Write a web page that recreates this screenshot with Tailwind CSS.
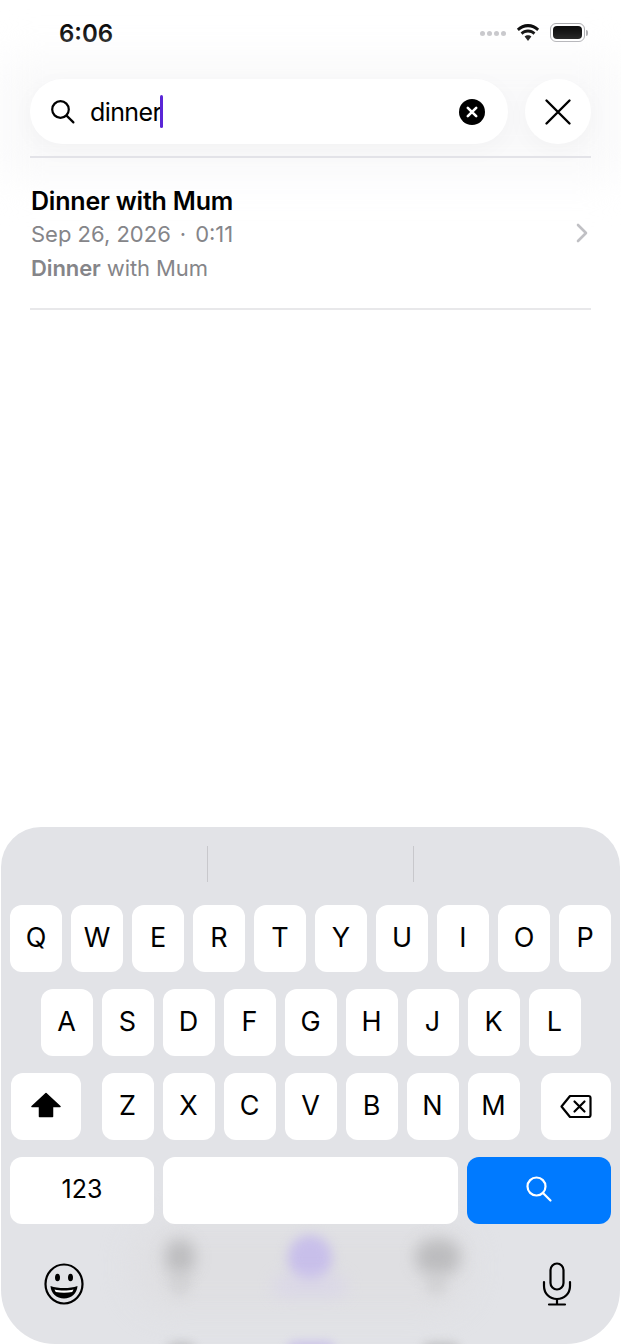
<!DOCTYPE html>
<html lang="en">
<head>
    <meta charset="UTF-8">
    <meta name="viewport" content="width=device-width, initial-scale=1.0">
    <title>Search</title>
    <script src="https://cdn.jsdelivr.net/npm/@tailwindcss/browser@4"></script>
</head>
<body class="bg-white font-['Inter',sans-serif] text-black">
<div class="relative flex h-[1344px] w-[621px] flex-col overflow-hidden">

    <!-- Status bar -->
    <div class="flex h-[68px] items-start justify-between pl-[59px] pr-[33px] pt-[20px]">
        <span class="text-[24px] font-semibold leading-[28px]">6:06</span>
        <div class="flex items-center pt-[3px]">
            <div class="mr-[10px] mt-[2px] flex gap-[2px]">
                <span class="h-[5px] w-[5px] rounded-full bg-[#c4c4c8]"></span>
                <span class="h-[5px] w-[5px] rounded-full bg-[#c4c4c8]"></span>
                <span class="h-[5px] w-[5px] rounded-full bg-[#c4c4c8]"></span>
                <span class="h-[5px] w-[5px] rounded-full bg-[#c4c4c8]"></span>
            </div>
            <svg class="mr-[10px]" width="24" height="18" viewBox="0 0 24 18" fill="black">
                <path d="M12 3.2c3.6 0 6.8 1.4 9.200 3.700l1.900-2.100C20.100 1.900 16.200 0 12 0S3.900 1.900.900 4.800l1.900 2.100C5.200 4.600 8.400 3.200 12 3.200z"/>
                <path d="M12 8.600c2.100 0 4 .8 5.500 2.100l1.900-2.100C17.400 6.800 14.800 5.600 12 5.600S6.600 6.800 4.600 8.600l1.900 2.100C8 9.400 9.900 8.600 12 8.600z"/>
                <path d="M12 11.200c-1.300 0-2.500.5-3.400 1.300L12 17l3.400-4.500c-.9-.8-2.100-1.300-3.400-1.300z"/>
            </svg>
            <div class="flex items-center">
                <div class="flex h-[19px] w-[35px] items-center justify-center rounded-[6px] border border-[#a8a8ac] p-[2px]">
                    <div class="h-full w-full rounded-[4px] bg-black"></div>
                </div>
                <div class="ml-[1px] h-[6px] w-[2px] rounded-r-full bg-[#a8a8ac]"></div>
            </div>
        </div>
    </div>

    <!-- Search row -->
    <div class="relative">
        <div class="pointer-events-none absolute inset-x-0 top-[-10px] h-[120px] bg-[#f9f9fa] blur-[20px]"></div>
        <div class="relative mt-[11px] flex h-[65px] items-stretch pl-[30px] pr-[30px]">
            <div class="flex w-[478px] items-center rounded-full bg-white pl-[20px] pr-[23px] shadow-[0_6px_24px_rgba(0,0,0,0.03)]">
                <svg width="26" height="26" viewBox="0 0 26 26" fill="none" stroke="black" stroke-width="2.200" stroke-linecap="round">
                    <circle cx="10.500" cy="10.500" r="8.300"/>
                    <path d="M16.600 16.600l6.800 6.800"/>
                </svg>
                <div class="ml-[14px] flex items-center text-[25px] leading-[32px] tracking-[-0.6px]">
                    <span>dinner</span>
                    <span class="ml-[-1px] h-[33px] w-[3px] rounded-full bg-[#5a26d6]"></span>
                </div>
                <svg class="ml-auto" width="26" height="26" viewBox="0 0 26 26">
                    <circle cx="13" cy="13" r="13" fill="black"/>
                    <path d="M8.800 8.800l8.400 8.400M17.200 8.800l-8.400 8.400" stroke="white" stroke-width="2.600" stroke-linecap="round"/>
                </svg>
            </div>
            <div class="ml-[17px] flex w-[66px] items-center justify-center rounded-full bg-white shadow-[0_6px_24px_rgba(0,0,0,0.03)]">
                <svg width="28" height="28" viewBox="0 0 28 28" fill="none" stroke="black" stroke-width="2.400" stroke-linecap="round">
                    <path d="M2.500 2.500l23 23M25.500 2.500l-23 23"/>
                </svg>
            </div>
        </div>
        <div class="relative mx-[30px] mt-[12px] h-[2px] bg-[#e3e3e8]"></div>
    </div>

    <!-- Result -->
    <div class="relative mx-[30px] flex h-[152px] items-center justify-between border-b-2 border-[#e8e8ea]">
        <div class="pl-[1px] pt-[2px]">
            <div class="mb-[-1px] mt-[1px] text-[25px] font-semibold leading-[34px] tracking-[-0.2px]">Dinner with Mum</div>
            <div class="flex text-[22px] leading-[34px] text-[#858589]">
                <span>Sep 26, 2026</span>
                <span class="mx-[9px]">·</span>
                <span>0:11</span>
            </div>
            <div class="text-[22px] leading-[34px] tracking-[-0.1px] text-[#858589]"><span class="font-semibold">Dinner</span> with Mum</div>
        </div>
        <svg class="mr-[3px]" width="12" height="20" viewBox="0 0 12 20" fill="none" stroke="#c0c0c4" stroke-width="2.600" stroke-linecap="round" stroke-linejoin="round">
            <path d="M2 2l8 8-8 8"/>
        </svg>
    </div>

    <!-- Keyboard -->
    <div class="relative mx-[1px] mt-auto h-[517px] overflow-hidden rounded-t-[40px] rounded-b-[54px] bg-[#e2e3e7]">
        <!-- blurred content behind the keyboard -->
        <div class="absolute left-[130px] top-[395px] h-[90px] w-[340px] rounded-[40px] bg-[#dfdfe2] blur-[14px]"></div>
        <div class="absolute left-[164px] top-[412px] h-[36px] w-[30px] rounded-full bg-[#b4b4b6] opacity-80 blur-[8px]"></div>
        <div class="absolute left-[168px] top-[445px] h-[24px] w-[22px] rounded-full bg-[#c8c8ca] opacity-50 blur-[6px]"></div>
        <div class="absolute left-[287px] top-[408px] h-[46px] w-[44px] rounded-full bg-[#c8bfea] blur-[6px]"></div>
        <div class="absolute left-[272px] top-[448px] h-[22px] w-[74px] rounded-full bg-[#d8d3ea] opacity-60 blur-[8px]"></div>
        <div class="absolute left-[414px] top-[412px] h-[36px] w-[46px] rounded-full bg-[#b4b4b6] opacity-80 blur-[8px]"></div>
        <div class="absolute left-[424px] top-[445px] h-[24px] w-[22px] rounded-full bg-[#c8c8ca] opacity-50 blur-[6px]"></div>
        <div class="absolute left-[165px] top-[515px] h-[20px] w-[30px] rounded-full bg-[#b0b0b2] opacity-60 blur-[5px]"></div>
        <div class="absolute left-[285px] top-[514px] h-[20px] w-[50px] rounded-full bg-[#c4b9ea] opacity-70 blur-[5px]"></div>
        <div class="absolute left-[420px] top-[515px] h-[20px] w-[40px] rounded-full bg-[#b0b0b2] opacity-60 blur-[5px]"></div>

        <!-- Suggestion bar -->
        <div class="relative flex h-[78px] items-start justify-center gap-[205px] pt-[19px]">
            <span class="h-[36px] w-[1px] bg-[#c8c8cc]"></span>
            <span class="h-[36px] w-[1px] bg-[#c8c8cc]"></span>
        </div>

        <div class="relative flex flex-col gap-[17px] text-[27px] leading-none">
            <div class="flex justify-center gap-[9px]">
                <div class="flex h-[67px] w-[52px] items-center justify-center rounded-[12px] bg-white pb-[3px]">Q</div>
                <div class="flex h-[67px] w-[52px] items-center justify-center rounded-[12px] bg-white pb-[3px]">W</div>
                <div class="flex h-[67px] w-[52px] items-center justify-center rounded-[12px] bg-white pb-[3px]">E</div>
                <div class="flex h-[67px] w-[52px] items-center justify-center rounded-[12px] bg-white pb-[3px]">R</div>
                <div class="flex h-[67px] w-[52px] items-center justify-center rounded-[12px] bg-white pb-[3px]">T</div>
                <div class="flex h-[67px] w-[52px] items-center justify-center rounded-[12px] bg-white pb-[3px]">Y</div>
                <div class="flex h-[67px] w-[52px] items-center justify-center rounded-[12px] bg-white pb-[3px]">U</div>
                <div class="flex h-[67px] w-[52px] items-center justify-center rounded-[12px] bg-white pb-[3px]">I</div>
                <div class="flex h-[67px] w-[52px] items-center justify-center rounded-[12px] bg-white pb-[3px]">O</div>
                <div class="flex h-[67px] w-[52px] items-center justify-center rounded-[12px] bg-white pb-[3px]">P</div>
            </div>
            <div class="flex justify-center gap-[9px]">
                <div class="flex h-[67px] w-[52px] items-center justify-center rounded-[12px] bg-white pb-[3px]">A</div>
                <div class="flex h-[67px] w-[52px] items-center justify-center rounded-[12px] bg-white pb-[3px]">S</div>
                <div class="flex h-[67px] w-[52px] items-center justify-center rounded-[12px] bg-white pb-[3px]">D</div>
                <div class="flex h-[67px] w-[52px] items-center justify-center rounded-[12px] bg-white pb-[3px]">F</div>
                <div class="flex h-[67px] w-[52px] items-center justify-center rounded-[12px] bg-white pb-[3px]">G</div>
                <div class="flex h-[67px] w-[52px] items-center justify-center rounded-[12px] bg-white pb-[3px]">H</div>
                <div class="flex h-[67px] w-[52px] items-center justify-center rounded-[12px] bg-white pb-[3px]">J</div>
                <div class="flex h-[67px] w-[52px] items-center justify-center rounded-[12px] bg-white pb-[3px]">K</div>
                <div class="flex h-[67px] w-[52px] items-center justify-center rounded-[12px] bg-white pb-[3px]">L</div>
            </div>
            <div class="flex justify-center gap-[9px]">
                <div class="mr-[12px] flex h-[67px] w-[70px] items-center justify-center rounded-[12px] bg-white pb-[3px]">
                    <svg width="30" height="26" viewBox="0 0 30 26" fill="black">
                        <path d="M15 1.500L1 14.500h7.500V24.500h13V14.500H29z" stroke="black" stroke-linejoin="round" stroke-width="1.500"/>
                    </svg>
                </div>
                <div class="flex h-[67px] w-[52px] items-center justify-center rounded-[12px] bg-white pb-[3px]">Z</div>
                <div class="flex h-[67px] w-[52px] items-center justify-center rounded-[12px] bg-white pb-[3px]">X</div>
                <div class="flex h-[67px] w-[52px] items-center justify-center rounded-[12px] bg-white pb-[3px]">C</div>
                <div class="flex h-[67px] w-[52px] items-center justify-center rounded-[12px] bg-white pb-[3px]">V</div>
                <div class="flex h-[67px] w-[52px] items-center justify-center rounded-[12px] bg-white pb-[3px]">B</div>
                <div class="flex h-[67px] w-[52px] items-center justify-center rounded-[12px] bg-white pb-[3px]">N</div>
                <div class="flex h-[67px] w-[52px] items-center justify-center rounded-[12px] bg-white pb-[3px]">M</div>
                <div class="ml-[12px] flex h-[67px] w-[70px] items-center justify-center rounded-[12px] bg-white pb-[1px]">
                    <svg width="32" height="25" viewBox="0 0 32 25" fill="none" stroke="black" stroke-width="2.200" stroke-linecap="round" stroke-linejoin="round">
                        <path d="M10 2h18.500a2 2 0 0 1 2 2v17a2 2 0 0 1-2 2H10L1.500 12.500z"/>
                        <path d="M14.500 7.500l10 10M24.500 7.500l-10 10"/>
                    </svg>
                </div>
            </div>
            <div class="flex justify-center gap-[9px]">
                <div class="flex h-[67px] w-[144px] items-center justify-center rounded-[12px] bg-white pb-[2px] text-[25px]">123</div>
                <div class="h-[67px] w-[295px] rounded-[12px] bg-white"></div>
                <div class="flex h-[67px] w-[144px] items-center justify-center rounded-[12px] bg-[#007aff] pb-[3px]">
                    <svg width="28" height="28" viewBox="0 0 28 28" fill="none" stroke="white" stroke-width="2.200" stroke-linecap="round">
                        <circle cx="11.500" cy="11.500" r="9"/>
                        <path d="M18 18l7.500 7.500"/>
                    </svg>
                </div>
            </div>
        </div>

        <!-- Emoji and dictation -->
        <div class="relative flex items-center justify-between pl-[43px] pr-[48px] pt-[38px]">
            <svg width="40" height="42" viewBox="0 0 40 42" fill="none">
                <ellipse cx="20" cy="21" rx="18.500" ry="19.500" stroke="black" stroke-width="2.200"/>
                <ellipse cx="13.500" cy="14.500" rx="2.500" ry="3.800" fill="black"/>
                <ellipse cx="26.500" cy="14.500" rx="2.500" ry="3.800" fill="black"/>
                <path d="M6.500 23c4 1.500 8.500 2 13.500 2s9.500-.5 13.500-2c-.5 7.500-6 12.500-13.500 12.500S7 30.500 6.500 23z" fill="black"/>
                <path d="M10.500 26.500c3 .7 6 1 9.500 1s6.500-.3 9.500-1c-.4 1-.8 1.800-1.300 2.500-2.500.5-5.200.7-8.200.7s-5.700-.2-8.200-.7c-.5-.7-1-1.500-1.300-2.500z" fill="white"/>
            </svg>
            <svg width="30" height="44" viewBox="0 0 30 44" fill="none" stroke="black" stroke-width="2.200" stroke-linecap="round">
                <rect x="8.500" y="1.500" width="13" height="26" rx="6.500"/>
                <path d="M2 20v4c0 7.500 5.500 13 13 13s13-5.500 13-13v-4"/>
                <path d="M15 37v5.500M7 42.500h16"/>
            </svg>
        </div>
    </div>
</div>
</body>
</html>
